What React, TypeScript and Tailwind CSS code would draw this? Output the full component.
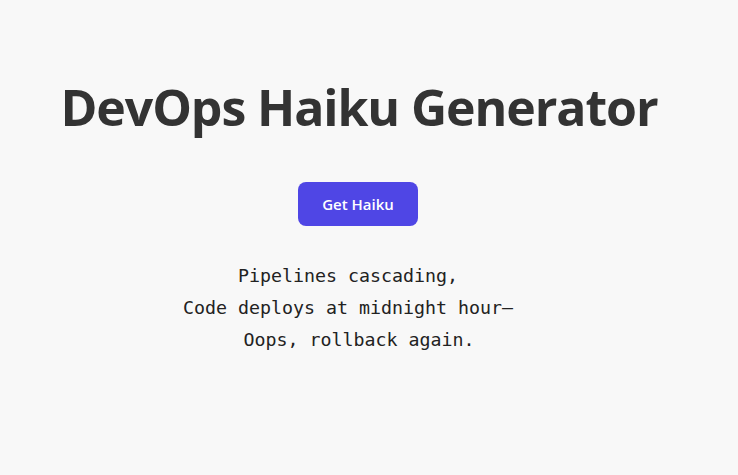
export default function App() {
  return (
    <div className="min-h-[475px] w-full bg-[#f8f8f8] text-[#333333]">
      <main className="flex flex-col items-center pr-[20px] pt-[77px]">
        <h1 className="font-['Open_Sans',sans-serif] text-[50px] font-bold leading-[1.2] tracking-[-1.1px]">
          DevOps Haiku Generator
        </h1>
        <button className="mt-[45px] mr-[2px] h-[44px] w-[120px] rounded-lg bg-[#4f46e5] font-['Open_Sans',sans-serif] text-[15px] font-semibold text-white">
          Get Haiku
        </button>
        <pre className="mt-[34px] mr-[22px] text-center font-['DejaVu_Sans_Mono',monospace] text-[18.3px] leading-[32px] text-[#222222]">
          {"Pipelines cascading,\nCode deploys at midnight hour—\n  Oops, rollback again."}
        </pre>
      </main>
    </div>
  );
}
